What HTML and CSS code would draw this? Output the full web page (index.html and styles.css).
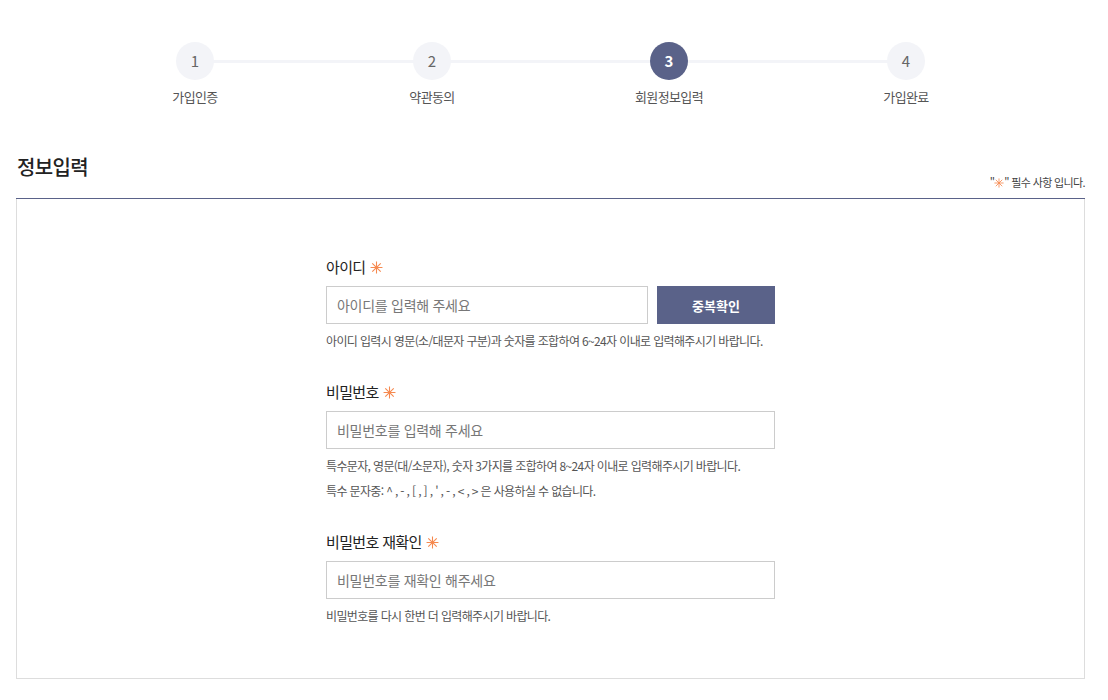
FILE: index.html
```html
<!DOCTYPE html>
<html lang="ko">
<head>
    <meta charset="UTF-8">
    <meta name="viewport" content="width=device-width, initial-scale=1.0">
    <title>회원가입 - 정보입력</title>
    <link rel="stylesheet" href="styles.css">
</head>
<body>
    <div class="container">
        <ol class="steps">
            <li class="step"><span class="num">1</span><span class="name">가입인증</span></li>
            <li class="step"><span class="num">2</span><span class="name">약관동의</span></li>
            <li class="step active"><span class="num">3</span><span class="name">회원정보입력</span></li>
            <li class="step"><span class="num">4</span><span class="name">가입완료</span></li>
        </ol>

        <div class="title-row">
            <h2>정보입력</h2>
            <p class="req-note">"<svg class="star" viewBox="0 0 12 12"><path d="M6 0.5V11.5M0.5 6H11.5M2.1 2.1L9.9 9.9M9.9 2.1L2.1 9.9"/></svg>" 필수 사항 입니다.</p>
        </div>

        <form class="form-box">
            <div class="fields">
                <div class="form-group">
                    <label for="userId">아이디 <svg class="star" viewBox="0 0 12 12"><path d="M6 0.5V11.5M0.5 6H11.5M2.1 2.1L9.9 9.9M9.9 2.1L2.1 9.9"/></svg></label>
                    <div class="input-row">
                        <input type="text" id="userId" placeholder="아이디를 입력해 주세요">
                        <button type="button" class="btn-check">중복확인</button>
                    </div>
                    <p class="help">아이디 입력시 영문(소/대문자 구분)과 숫자를 조합하여 6~24자 이내로 입력해주시기 바랍니다.</p>
                </div>

                <div class="form-group">
                    <label for="userPw">비밀번호 <svg class="star" viewBox="0 0 12 12"><path d="M6 0.5V11.5M0.5 6H11.5M2.1 2.1L9.9 9.9M9.9 2.1L2.1 9.9"/></svg></label>
                    <input type="password" id="userPw" placeholder="비밀번호를 입력해 주세요">
                    <p class="help">특수문자, 영문(대/소문자), 숫자 3가지를 조합하여 8~24자 이내로 입력해주시기 바랍니다.</p>
                    <p class="help">특수 문자중: ^ , - , [ , ] , ' , - , &lt; , &gt; 은 사용하실 수 없습니다.</p>
                </div>

                <div class="form-group">
                    <label for="userPw2">비밀번호 재확인 <svg class="star" viewBox="0 0 12 12"><path d="M6 0.5V11.5M0.5 6H11.5M2.1 2.1L9.9 9.9M9.9 2.1L2.1 9.9"/></svg></label>
                    <input type="password" id="userPw2" placeholder="비밀번호를 재확인 해주세요">
                    <p class="help">비밀번호를 다시 한번 더 입력해주시기 바랍니다.</p>
                </div>
            </div>
        </form>
    </div>
</body>
</html>
```

FILE: styles.css
```css
body {
    font-family: "Noto Sans CJK KR", "Noto Sans", sans-serif;
    color: #222;
    background-color: #fff;
    margin: 0;
    padding: 0;
    letter-spacing: -0.04em;
}
.container {
    width: 1069px;
    margin-left: 16px;
}
.steps {
    list-style: none;
    display: flex;
    justify-content: center;
    margin: 0;
    padding: 42px 0 0;
}
.step {
    position: relative;
    width: 237px;
    display: flex;
    flex-direction: column;
    align-items: center;
}
.step::before {
    content: "";
    position: absolute;
    top: 18px;
    left: 50%;
    width: 237px;
    height: 3px;
    background-color: #f3f4f8;
}
.step:last-child::before {
    display: none;
}
.num {
    position: relative;
    width: 38px;
    height: 38px;
    border-radius: 50%;
    background-color: #f3f4f8;
    color: #666;
    font-size: 15px;
    line-height: 38px;
    text-align: center;
    letter-spacing: 0;
}
.step.active .num {
    background-color: #5a6289;
    color: #fff;
    font-weight: bold;
}
.name {
    margin-top: 8px;
    font-size: 13px;
    color: #555;
    line-height: 18px;
}
.title-row {
    display: flex;
    justify-content: space-between;
    align-items: flex-end;
    margin-top: 46px;
    border-bottom: 1px solid #5a6289;
}
.title-row h2 {
    margin: 0 0 0 1px;
    font-size: 20px;
    font-weight: 500;
    line-height: 30px;
    color: #222;
    padding-bottom: 16px;
}
.req-note {
    margin: 0 0 9px;
    font-size: 11px;
    color: #444;
    line-height: 14px;
}
.star {
    width: 10px;
    height: 10px;
    fill: none;
    stroke: #f6894f;
    stroke-width: 1;
    vertical-align: -1px;
}
label .star {
    width: 13px;
    height: 13px;
    margin-left: 1px;
    vertical-align: -1px;
}
.form-box {
    border: 1px solid #ddd;
    border-top: none;
    height: 480px;
    box-sizing: border-box;
    padding-top: 57px;
}
.fields {
    width: 449px;
    margin: 0 auto;
}
.form-group {
    margin-bottom: 31px;
}
label {
    display: block;
    font-size: 15px;
    line-height: 22px;
    margin-bottom: 8px;
    color: #222;
}
input[type="text"],
input[type="password"] {
    width: 100%;
    height: 38px;
    padding: 0 10px;
    border: 1px solid #ccc;
    box-sizing: border-box;
    font-family: inherit;
    font-size: 14px;
    letter-spacing: -0.02em;
    color: #333;
}
input::placeholder {
    color: #777;
}
.input-row {
    display: flex;
    gap: 9px;
}
.input-row input[type="text"] {
    width: 322px;
}
.btn-check {
    width: 118px;
    height: 38px;
    border: none;
    background-color: #5a6289;
    color: #fff;
    font-family: inherit;
    font-size: 13px;
    font-weight: bold;
    cursor: pointer;
}
.help {
    margin: 0;
    padding-top: 7px;
    font-size: 12px;
    line-height: 19px;
    color: #555;
}
.help + .help {
    padding-top: 6px;
}
```
